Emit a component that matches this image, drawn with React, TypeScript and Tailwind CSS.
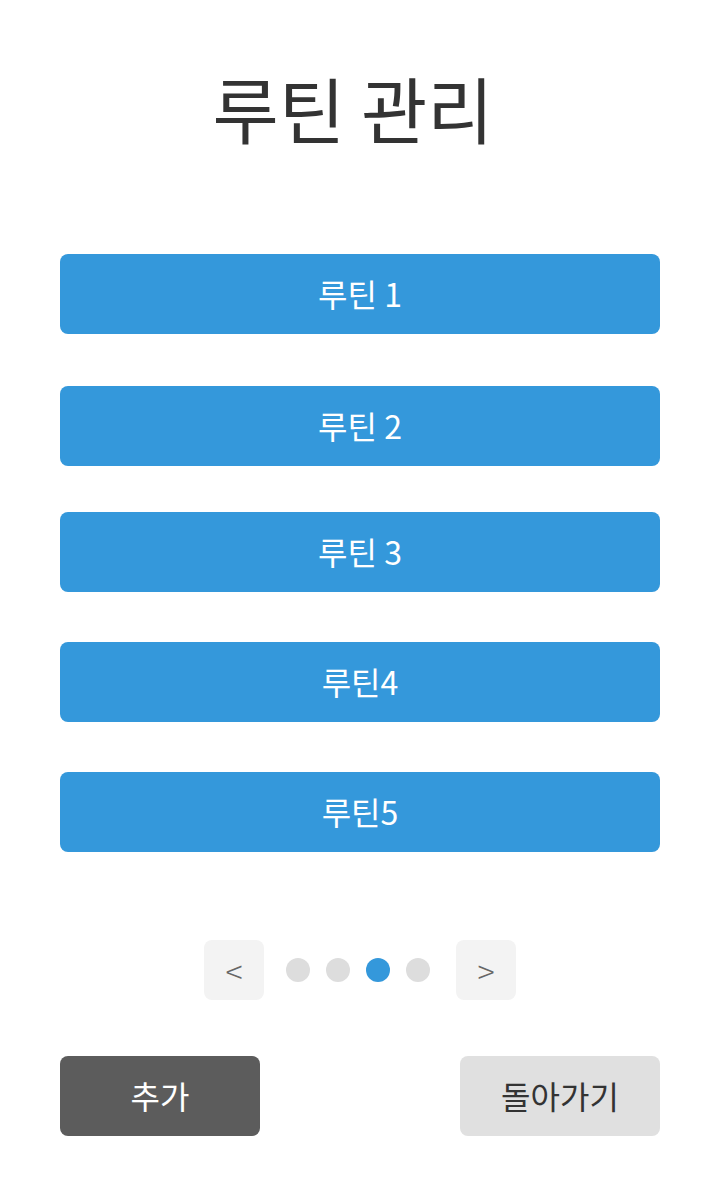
const font = { fontFamily: '"Noto Sans CJK KR", "Noto Sans", sans-serif' };

const routines = [
  { label: '루틴 1', mt: 'mt-0' },
  { label: '루틴 2', mt: 'mt-[52px]' },
  { label: '루틴 3', mt: 'mt-[46px]' },
  { label: '루틴4', mt: 'mt-[50px]' },
  { label: '루틴5', mt: 'mt-[50px]' },
];

export default function App() {
  return (
    <div className="w-[720px] h-[1200px] bg-white px-[60px] pt-[71px]" style={font}>
      <h1 className="pr-[14px] text-center text-[72px] leading-[72px] font-normal text-[#333333]">루틴 관리</h1>

      <div className="mt-[111px] flex flex-col">
        {routines.map((r) => (
          <button
            key={r.label}
            className={`${r.mt} h-[80px] w-full rounded-lg bg-[#3498db] pb-[3px] text-[32px] text-white`}
          >
            {r.label}
          </button>
        ))}
      </div>

      <div className="mt-[88px] flex items-center justify-center gap-[22px]">
        <button className="w-[60px] h-[60px] rounded-lg bg-[#f3f3f3] text-[32px] font-light text-[#666666]">&lt;</button>
        <div className="flex items-center gap-4 pr-1">
          <span className="w-6 h-6 rounded-full bg-[#dddddd]" />
          <span className="w-6 h-6 rounded-full bg-[#dddddd]" />
          <span className="w-6 h-6 rounded-full bg-[#3498db]" />
          <span className="w-6 h-6 rounded-full bg-[#dddddd]" />
        </div>
        <button className="w-[60px] h-[60px] rounded-lg bg-[#f3f3f3] text-[32px] font-light text-[#666666]">&gt;</button>
      </div>

      <div className="mt-[56px] flex justify-between">
        <button className="w-[200px] h-[80px] rounded-lg bg-[#5c5c5c] pb-[3px] text-[32px] text-white">추가</button>
        <button className="w-[200px] h-[80px] rounded-lg bg-[#e0e0e0] pb-[3px] text-[32px] text-[#333333]">돌아가기</button>
      </div>
    </div>
  );
}
